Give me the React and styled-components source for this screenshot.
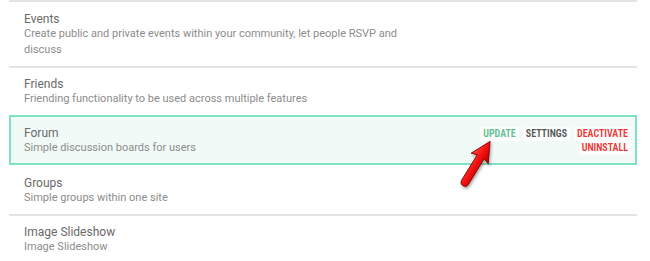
import React from "react";
import styled, { createGlobalStyle, css } from "styled-components";

const GlobalStyle = createGlobalStyle`
  html, body { margin: 0; padding: 0; background: #ffffff; }
  body { font-family: Roboto, "Liberation Sans", Arial, sans-serif; }
`;

const List = styled.div`
  width: 628px;
  margin-left: 9px;
  display: flex;
  flex-direction: column;
`;

const Row = styled.div`
  position: relative;
  display: flex;
  align-items: flex-start;
  justify-content: space-between;
  padding: 10px 4px 8px 15px;
  border-top: 2px solid ${(p) => (p.$divider ? "#e4e4e4" : "transparent")};
  ${(p) => p.$first && css`border-top-color: #e4e4e4; padding-top: 11px;`}
  ${(p) =>
    p.$active &&
    css`
      padding: 10px 4px 7px 13px;
      border: 2px solid #80e0c4;
      background: #f2faf7;
    `}
  ${(p) => !p.$divider && !p.$active && !p.$first && css`border-top-width: 0; padding-top: 12px;`}
`;

const Info = styled.div`
  display: flex;
  flex-direction: column;
  max-width: 400px;
`;

const Title = styled.div`
  font-size: 12px;
  line-height: 13px;
  color: #6a6a6a;
`;

const Desc = styled.div`
  font-size: 11px;
  line-height: 16px;
  color: #8c8c8c;
`;

const Actions = styled.div`
  display: flex;
  flex-direction: column;
  align-items: flex-end;
`;

const ActionLine = styled.div`
  display: flex;
  gap: 4px;
`;

const tones = {
  green: "#5cbf90",
  gray: "#555555",
  red: "#ee3434",
};

const ActionButton = styled.span`
  font-size: 10px;
  font-weight: 600;
  font-stretch: 76%;
  line-height: 12px;
  padding: 1px 3px;
  text-transform: uppercase;
  background: rgba(255, 255, 255, 0.75);
  color: ${(p) => tones[p.$tone]};
`;

const ArrowSvg = styled.svg`
  position: absolute;
  left: 442px;
  top: 14px;
  overflow: visible;
  filter: drop-shadow(1px 2px 1.5px rgba(0, 0, 0, 0.35));
`;

function Arrow() {
  return (
    <ArrowSvg width="60" height="60" viewBox="0 0 60 60">
      <defs>
        <linearGradient id="arrowRed" x1="0" y1="-10" x2="0" y2="10" gradientUnits="userSpaceOnUse">
          <stop offset="0" stopColor="#ff4a3a" />
          <stop offset="0.5" stopColor="#f20f0f" />
          <stop offset="1" stopColor="#b40000" />
        </linearGradient>
      </defs>
      <g transform="translate(11 53) rotate(-58.5)">
        <path
          d="M2,-4 L32,-4 L30,-10 L50,0 L30,10 L32,4 L2,4 A4,4 0 0 1 2,-4 Z"
          fill="url(#arrowRed)"
          stroke="#7a0000"
          strokeWidth="0.8"
          strokeLinejoin="round"
        />
      </g>
    </ArrowSvg>
  );
}

const modules = [
  { title: "Events", desc: "Create public and private events within your community, let people RSVP and discuss", first: true },
  { title: "Friends", desc: "Friending functionality to be used across multiple features", divider: true },
  { title: "Forum", desc: "Simple discussion boards for users", active: true },
  { title: "Groups", desc: "Simple groups within one site" },
  { title: "Image Slideshow", desc: "Image Slideshow", divider: true },
];

export default function App() {
  return (
    <>
      <GlobalStyle />
      <List>
        {modules.map((m) => (
          <Row key={m.title} $first={m.first} $divider={m.divider} $active={m.active}>
            <Info>
              <Title>{m.title}</Title>
              <Desc>{m.desc}</Desc>
            </Info>
            {m.active && (
              <>
                <Actions>
                  <ActionLine>
                    <ActionButton $tone="green">Update</ActionButton>
                    <ActionButton $tone="gray">Settings</ActionButton>
                    <ActionButton $tone="red">Deactivate</ActionButton>
                  </ActionLine>
                  <ActionLine>
                    <ActionButton $tone="red">Uninstall</ActionButton>
                  </ActionLine>
                </Actions>
                <Arrow />
              </>
            )}
          </Row>
        ))}
      </List>
    </>
  );
}
